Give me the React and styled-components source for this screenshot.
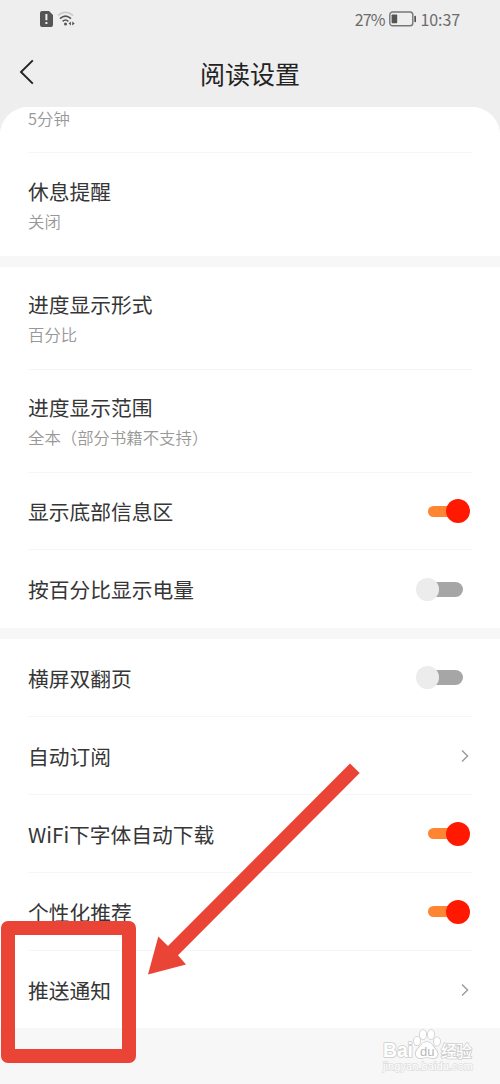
import styled, { createGlobalStyle } from "styled-components";

const GlobalStyle = createGlobalStyle`
body {
margin: 0;
background: #eeeeee;
}
* {
box-sizing: border-box;
}
`;

const Screen = styled.div`
position: relative;
width: 500px;
height: 1084px;
overflow: hidden;
display: flex;
flex-direction: column;
background: #eeeeee;
font-family: "Noto Sans CJK SC", sans-serif;
`;

const StatusBar = styled.div`
height: 38px;
padding: 0 40px;
display: flex;
align-items: center;
justify-content: space-between;
`;
const StatusGroup = styled.div`
display: flex;
align-items: center;
gap: ${props => props.gap}px;
`;
const StatusText = styled.span`
font-size: 16px;
line-height: 20px;
letter-spacing: ${props => props.spacing || 0}px;
color: #6c6c6c;
`;

const Header = styled.div`
position: relative;
height: 69px;
display: flex;
justify-content: center;
`;
const BackIcon = styled.svg`
position: absolute;
left: 18px;
top: 20px;
`;
const Title = styled.h1`
margin: 17px 0 0;
font-size: 25px;
line-height: 36px;
font-weight: 400;
color: #222222;
`;

const Panel = styled.div`
flex: 1;
display: flex;
flex-direction: column;
background: #f7f7f7;
border-radius: 28px 28px 0 0;
overflow: hidden;
`;
const Section = styled.div`
padding: 0 28px;
margin-bottom: ${props => props.gap}px;
background: #ffffff;
`;
const Row = styled.div`
height: ${props => props.h}px;
display: flex;
align-items: center;
justify-content: space-between;
border-bottom: ${props => (props.last ? "none" : "1px solid #f6f6f6")};
`;
const Text = styled.div`
display: flex;
flex-direction: column;
gap: 2px;
`;
const Label = styled.span`
font-size: 20.75px;
line-height: 30px;
white-space: nowrap;
color: #363636;
`;
const Desc = styled.span`
font-size: 16.4px;
line-height: 26px;
font-weight: 350;
white-space: nowrap;
color: #989898;
`;
const ClippedRow = styled(Row)`
align-items: flex-start;
`;
const ClippedDesc = styled(Desc)`
margin-top: -2px;
`;

const Switch = styled.div`
height: 24px;
display: flex;
align-items: center;
margin-right: ${props => (props.on ? 2 : 9)}px;
`;
const Track = styled.div`
width: ${props => (props.on ? 30 : 35)}px;
height: ${props => (props.on ? 11 : 15)}px;
margin-left: ${props => (props.on ? 0 : -11)}px;
border-radius: 8px;
background: ${props => (props.on ? "#ff8533" : "#a6a6a6")};
`;
const Knob = styled.div`
position: relative;
flex: none;
width: ${props => (props.on ? 24 : 23)}px;
height: ${props => (props.on ? 24 : 23)}px;
margin-left: ${props => (props.on ? -12 : 0)}px;
border-radius: 50%;
background: ${props => (props.on ? "#ff1900" : "#ececec")};
z-index: 1;
`;
const Chevron = styled.svg`
margin-right: 3px;
`;

const Highlight = styled.div`
position: absolute;
left: 1px;
top: 921px;
width: 135px;
height: 142px;
border: 14px solid #ea4437;
border-radius: 7px;
`;
const Arrow = styled.svg`
position: absolute;
left: 140px;
top: 755px;
`;
const Watermark = styled.svg`
position: absolute;
left: 375px;
top: 1022px;
`;

const Toggle = ({ on }) => (
    <Switch on={on ? 1 : 0}>
        {on ? (
            <>
                <Track on={1} />
                <Knob on={1} />
            </>
        ) : (
            <>
                <Knob />
                <Track />
            </>
        )}
    </Switch>
);

const Item = ({ label, desc, h, last, children }) => (
    <Row h={h} last={last ? 1 : 0}>
        <Text>
            <Label>{label}</Label>
            {desc && <Desc>{desc}</Desc>}
        </Text>
        {children}
    </Row>
);

const More = () => (
    <Chevron width="8" height="14" viewBox="0 0 8 14" fill="none" stroke="#9a9a9a" strokeWidth="1.4">
        <path d="M1 1.5L6.6 7L1 12.5" />
    </Chevron>
);

const App = () => {
    return (
        <Screen>
            <GlobalStyle />
            <StatusBar>
                <StatusGroup gap={4}>
                    <svg width="13" height="16" viewBox="0 0 13 16">
                        <path d="M2 0H9L13 4V14Q13 16 11 16H2Q0 16 0 14V2Q0 0 2 0Z" fill="#555555" />
                        <path d="M6.4 3V9.3M6.4 11V13" stroke="#eeeeee" strokeWidth="2" />
                    </svg>
                    <svg width="19" height="16" viewBox="0 0 19 16" fill="none">
                        <path d="M1 4.4Q8.5 -2 16 4.4" stroke="#c8c8c8" strokeWidth="1.5" />
                        <path d="M3 7.6Q8.5 2.6 14 7.6" stroke="#555555" strokeWidth="1.6" />
                        <path d="M5.6 10.3Q8.5 7.7 11.4 10.3" stroke="#555555" strokeWidth="1.6" />
                        <circle cx="8.5" cy="13" r="1.5" fill="#555555" />
                        <path d="M13.9 10.6V14.4L11.6 12.5ZM15.2 10.6V14.4L17.7 12.5Z" fill="#555555" />
                    </svg>
                </StatusGroup>
                <StatusGroup gap={4}>
                    <StatusText spacing={-0.9}>27%</StatusText>
                    <svg width="28" height="16" viewBox="0.6 0 28 16">
                        <rect x="1.4" y="1" width="23" height="13.8" rx="2.8" fill="none" stroke="#777777" strokeWidth="1.4" />
                        <rect x="3.2" y="3.5" width="5.6" height="8.8" rx="0.8" fill="#555555" />
                        <rect x="25.9" y="4.7" width="1.7" height="6.5" rx="0.8" fill="#555555" />
                    </svg>
                    <StatusText spacing={-0.1}>10:37</StatusText>
                </StatusGroup>
            </StatusBar>
            <Header>
                <BackIcon width="18" height="28" viewBox="0 0 18 28" fill="none" stroke="#222222" strokeWidth="1.9">
                    <path d="M14.8 2.3L3 14L14.8 25.7" />
                </BackIcon>
                <Title>阅读设置</Title>
            </Header>
            <Panel>
                <Section gap={11}>
                    <ClippedRow h={46}>
                        <ClippedDesc>5分钟</ClippedDesc>
                    </ClippedRow>
                    <Item h={103} label="休息提醒" desc="关闭" last />
                </Section>
                <Section gap={11}>
                    <Item h={103} label="进度显示形式" desc="百分比" />
                    <Item h={103} label="进度显示范围" desc="全本（部分书籍不支持）" />
                    <Item h={77} label="显示底部信息区"><Toggle on /></Item>
                    <Item h={78} label="按百分比显示电量" last><Toggle /></Item>
                </Section>
                <Section gap={0}>
                    <Item h={78} label="横屏双翻页"><Toggle /></Item>
                    <Item h={78} label="自动订阅"><More /></Item>
                    <Item h={78} label="WiFi下字体自动下载"><Toggle on /></Item>
                    <Item h={78} label="个性化推荐"><Toggle on /></Item>
                    <Item h={77} label="推送通知" last><More /></Item>
                </Section>
            </Panel>

            <Watermark width="110" height="56" viewBox="0 0 110 56">
                <g fill="#ffffff" stroke="#cccccc" strokeWidth="1.6" paintOrder="stroke" strokeLinejoin="round">
                    <text x="8" y="35" fontSize="19.5" fontFamily="Liberation Sans, sans-serif" fontWeight="700" textLength="30">Bai</text>
                    <ellipse cx="42" cy="19" rx="3" ry="4.2" />
                    <ellipse cx="48" cy="12.5" rx="3.1" ry="4.5" />
                    <ellipse cx="56" cy="12.5" rx="3.1" ry="4.5" />
                    <ellipse cx="62" cy="19.5" rx="3" ry="4.2" />
                    <path d="M52 20C57 20 58 25 61 28C65 33 61 37 57 36C53 35 50 35 47 36C42 37 39 33 42 28C45 25 47 20 52 20Z" />
                    <text x="66" y="35" fontFamily="Noto Sans CJK SC, sans-serif" fontSize="16" fontWeight="500" textLength="31">经验</text>
                </g>
                <text x="45" y="34" fontFamily="Liberation Sans, sans-serif" fontSize="13" fill="#b8b8b8">du</text>
                <text x="8" y="48" fontFamily="Liberation Sans, sans-serif" fontSize="11" fill="#ffffff" stroke="#dedede" strokeWidth="1.4" paintOrder="stroke" textLength="90">jingyan.baidu.com</text>
            </Watermark>
            <Highlight />
            <Arrow width="225" height="225" viewBox="140 755 225 225">
                <path d="M350 763.5L359.7 773L178 955.3L186 964.5L148 974.5L158.3 936.5L168 946Z" fill="#ea4437" />
            </Arrow>
        </Screen>
    );
};

export default App;
